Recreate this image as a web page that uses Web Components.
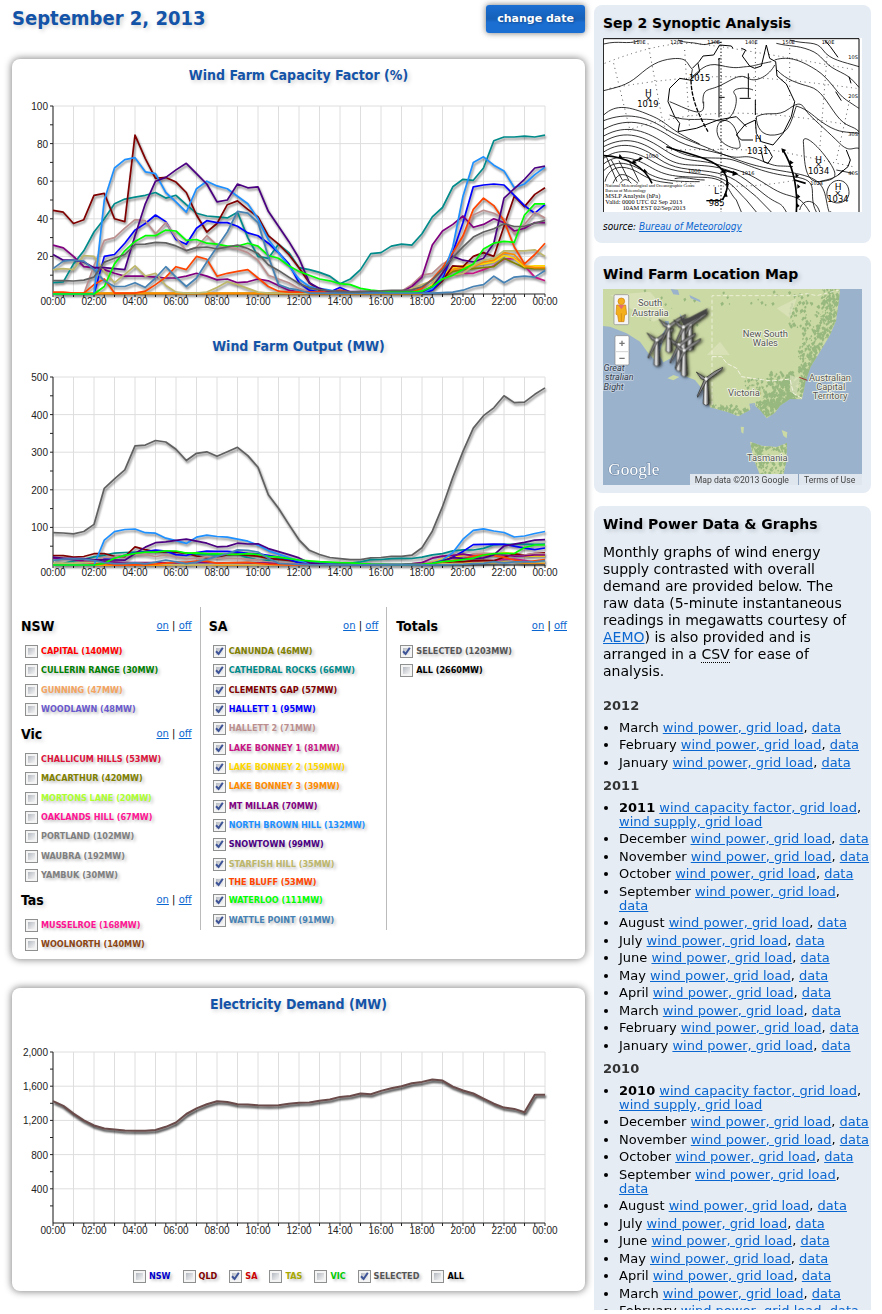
<!DOCTYPE html>
<html lang="en">
<head>
<meta charset="utf-8">
<title>Wind farm performance - September 2, 2013</title>
<style>
  html, body { margin: 0; background: #fff; }
  body { font-family: "DejaVu Sans", Verdana, sans-serif; color: #000; }
</style>
</head>
<body>
<wind-app></wind-app>

<template id="t-synoptic">
  <style>
    :host { display: block; }
    svg { display: block; width: 100%; height: auto; }
    .l path { fill: none; stroke: #000; stroke-width: 2.4; }
    .c { font: 25px "DejaVu Sans", sans-serif; }
    .c .h { font-size: 27px; }
    .n { font: 19px "Liberation Serif", serif; }
    .g { font: 15px "DejaVu Sans", sans-serif; }
  </style>
  <svg viewBox="40 114 777 522" role="img" aria-label="Synoptic chart">
    <rect x="40" y="114" width="777" height="522" fill="#fff"/>
    <g fill="none" stroke="#555" stroke-width="3" stroke-dasharray="3 11">
      <path d="M72 190 122 395M175 130 220 370 235 400M285 150 300 390M497 130 498 390M600 145 600 300M712 170 690 450M780 300 740 480"/>
      <path d="M45 190Q220 120 330 132T800 210M60 265Q260 230 400 230T800 265M115 390Q250 345 400 340T780 375M230 450 400 448 560 452 790 500M260 545Q440 575 620 540"/>
    </g>
    <path fill="none" stroke="#000" stroke-width="3" stroke-dasharray="4 6" d="M394 125V636"/>
    <g class="l">
      <path d="M42 272C80 262 110 258 145 228S205 180 250 176 290 190 308 208L304 232C330 215 345 185 392 196S445 202 470 200 495 195 545 185"/>
      <path d="M42 345C80 310 120 320 180 345S230 385 330 432"/>
      <path d="M42 132C90 120 110 135 150 122M265 120C290 130 300 125 330 132S370 120 395 128"/>
      <path d="M42 362C110 335 170 350 220 382S300 420 380 455 450 455 510 480 560 495 610 500"/>
      <path d="M42 388C120 345 190 375 245 412S370 450 420 470 500 500 590 515 700 545 710 600 720 630 725 636"/>
      <path d="M42 408C110 370 170 390 240 440S380 465 430 480 520 520 610 530 650 580 680 636"/>
      <path d="M42 425C110 385 165 410 225 450S320 475 390 495 470 515 540 560 620 570 660 636"/>
      <path d="M42 440C110 405 160 425 215 465S300 490 370 500 470 540 520 580 570 600 590 636"/>
      <path d="M42 456C100 418 155 440 205 475S290 505 360 515 450 550 500 590L545 636"/>
      <path d="M42 475C90 440 140 455 190 485S280 515 350 525 430 560 470 600L500 636"/>
      <path d="M42 492C80 460 130 470 180 500S260 530 340 532 410 570 440 600L455 636"/>
      <path d="M42 512C80 475 120 490 165 515S240 545 330 545"/>
      <path d="M46 545C60 490 110 495 150 520S210 545 250 550"/>
      <path d="M70 550C85 515 105 515 145 550M92 550C102 535 112 535 125 550"/>
      <path d="M50 470 82 545M65 480 98 540M88 482 118 542M120 487 148 545"/>
      <path d="M255 536C290 528 310 540 345 540M260 572C300 562 320 572 345 570"/>
      <path d="M340 310C338 260 355 275 395 255S450 220 475 235 540 225 555 195"/>
      <path d="M240 305C290 325 340 355 342 320V305M240 345C290 370 340 350 385 362S450 300 435 282 470 260 490 270"/>
      <path d="M382 395C380 350 425 350 440 395S455 445 440 445 385 430 382 395ZM500 350C540 330 560 355 600 325S640 325 660 345 720 400 750 430 790 440 808 445"/>
      <path d="M500 350C500 380 515 410 555 405S600 380 620 318C660 330 670 350 710 375S770 395 808 400"/>
      <path d="M562 210C590 240 625 250 660 260S710 305 740 345 790 375 808 395"/>
      <path d="M555 180C600 165 640 185 680 210S740 280 770 300 800 320 808 325"/>
      <path d="M560 130C600 140 620 135 660 150S700 190 740 210 780 230 808 262M600 120C650 135 680 120 700 150S760 185 808 200"/>
      <path d="M641 425C640 400 680 430 715 480S740 540 690 545 645 470 641 425ZM712 575C720 530 775 530 778 575S705 620 712 575Z"/>
      <path d="M690 545C700 540 740 540 760 510M630 630C640 590 680 600 690 636M740 510 790 520"/>
    </g>
    <g fill="none" stroke="#000" stroke-width="3" stroke-linejoin="round">
      <path d="M308 205 328 185 340 168 372 165 390 135 425 138 430 145M455 145 468 150 458 168 480 198 495 205 515 198 530 135 540 175 558 185 562 228 590 252 615 305 605 350 580 400 550 435 515 425 500 400 497 360 465 375 440 405 455 420 490 420M325 190 330 215 300 240 270 235 240 265 235 305 255 350 270 370 265 395 320 385 385 360 440 350 470 380"/>
      <path d="M525 435 540 455 548 470 535 490 522 485 515 455M770 450 782 480 775 500 745 525M705 120 722 140 745 172M738 275 755 302M778 230 784 250M385 178 392 175"/>
    </g>
    <path fill="none" stroke="#000" stroke-width="3" d="M388 175V352M497 300V345M476 220V293M450 295H483M388 292H405"/>
    <path fill="none" stroke="#000" stroke-width="4" stroke-dasharray="13 4" d="M304 240C305 300 330 350 355 395"/>
    <g fill="none" stroke="#000" stroke-width="5">
      <path d="M42 467C110 470 165 500 187 550M230 440C290 460 370 475 398 510S410 580 398 600M580 450C610 500 625 560 620 636"/>
      <path d="M130 485 155 475M400 510 440 520M615 540 648 550"/>
    </g>
    <path d="M90 462 100 475 86 475ZM130 480 142 490 126 492ZM164 506 175 518 160 515ZM398 505 412 518 394 518ZM430 512 446 522 428 528ZM412 540 418 556 408 556ZM408 572 414 590 402 590ZM575 445 590 450 578 458ZM600 480 612 488 600 494ZM617 520 628 527 618 534ZM623 552 632 560 623 566ZM623 582 632 590 622 596ZM622 610 630 618 620 624ZM150 470 160 475 148 484Z"/>
    <path fill="#fff" d="M43 552H347V633H43Z"/>
    <path d="M350 600H393V604H350Z"/>
    <g class="g">
      <text x="130" y="131">110E</text><text x="242" y="131">120E</text><text x="353" y="131">130E</text><text x="466" y="131">140E</text><text x="578" y="131">150E</text><text x="696" y="131">160E</text>
      <text x="776" y="178">10S</text><text x="776" y="294">20S</text><text x="776" y="408">30S</text><text x="776" y="525">40S</text>
      <text x="168" y="475">1000</text><text x="295" y="520">1000</text><text x="456" y="526">1016</text><text x="662" y="556">1024</text>
    </g>
    <g class="c">
      <text x="298" y="243">1015</text><text class="h" x="166" y="287">H</text><text x="166" y="302">×</text><text x="143" y="321">1019</text>
      <text class="h" x="495" y="427">H</text><text x="472" y="461">1031</text><text class="h" x="677" y="488">H</text><text x="676" y="502">×</text><text x="655" y="521">1034</text>
      <text class="h" x="735" y="571">H</text><text x="734" y="587">×</text><text x="713" y="606">1034</text><text class="h" x="373" y="583">L</text><text x="357" y="618">985</text>
    </g>
    <text class="n" x="47" y="561" style="font-size:13px">National Meteorological and Oceanographic Centre</text>
    <text class="n" x="47" y="575" style="font-size:13px">Bureau of Meteorology</text>
    <text class="n" x="47" y="594">MSLP Analysis (hPa)</text>
    <text class="n" x="47" y="612">Valid: 0000 UTC 02 Sep 2013</text>
    <text class="n" x="99" y="631">10AM EST 02/Sep/2013</text>
    <path fill="none" stroke="#000" stroke-width="3" d="M41 636V116H808V636"/>
  </svg>
</template>

<template id="t-map">
  <style>
    :host { display: block; }
    svg { display: block; width: 100%; height: auto; }
    .p text { font: 28px Roboto, sans-serif; fill: #555; stroke: #f2f5e6; stroke-width: 5; paint-order: stroke; text-anchor: middle; }
    .p .s { font-size: 27px; font-style: italic; fill: #333c4d; stroke: #c5d3e2; }
    .f text { font: 26px Roboto, sans-serif; fill: #444; }
  </style>
  <svg viewBox="39 132 777 588" role="img" aria-label="Map of south-east Australia with wind farm locations">
    <defs>
      <clipPath id="land"><path d="M39 132H750L747 165 738 228 720 270 690 320 662 365 647 408 636 463 600 462 570 482 555 503 530 520 512 497 488 476 480 495 445 514 415 502 360 487 343 440 315 405 292 396 262 372 285 350 264 302 242 340 220 352 208 330 228 250 205 285 200 350 175 325 150 290 110 265 60 245 39 243ZM480 590 515 602 560 606 591 594 589 650 580 690 510 690 490 640ZM232 400 250 390 268 396 250 406ZM452 545 462 546 460 566 454 562ZM575 555 592 562 590 580 580 572Z"/></clipPath>
      <linearGradient id="tw"><stop offset="0" stop-color="#777"/><stop offset=".4" stop-color="#eee"/><stop offset="1" stop-color="#222"/></linearGradient>
      <filter id="sh" x="-40%" y="-40%" width="180%" height="180%"><feDropShadow dx="5" dy="2" stdDeviation="4" flood-opacity=".8"/></filter>
      <g id="turbine">
        <path fill="url(#tw)" stroke="#222" stroke-width="1.5" d="M-4 0H4L9 74 0 79-9 74Z"/>
        <path fill="#888" stroke="#222" stroke-width="2" d="M0-4 25-22 50-35 48-28 4 4ZM-3-4-29-21-14 0 0 3ZM-4 0-26 50-25 55 2 6Z"/>
        <circle r="5" fill="#eee"/>
      </g>
    </defs>
    <rect x="39" y="132" width="777" height="588" fill="#9ab2cc"/>
    <g clip-path="url(#land)">
      <path fill="#cbd9a4" d="M39 132H816V720H39Z"/>
      <g id="woods"></g>
      <path fill="#dde3bd" opacity=".7" d="M60 150 180 140 240 210 190 230 120 190ZM390 290 420 330 350 330ZM600 390 630 400 620 450 600 440ZM560 190 620 160 600 220Z"/>
      <path fill="#9ab2cc" d="M242 132 264 135 268 150 250 148ZM298 150 330 165 332 172 302 160ZM224 228 236 228 240 260 228 246ZM268 205 290 230 282 240ZM478 476 494 474 500 494 482 498Z"/>
    </g>
    <path d="M366 480V152H612L652 146 680 152 748 135" fill="none" stroke="#f3f3e0" stroke-width="2.5" stroke-dasharray="12 7"/>
    <path d="M366 335 395 335 410 355 440 370 455 395 500 402 545 408 600 402 610 445 636 460" fill="none" stroke="#f3f3e0" stroke-width="3" stroke-dasharray="14 5"/>
    <path d="M628 397 652 406" stroke="#a03030" stroke-width="3"/>
    <g class="p">
      <text x="180" y="183">South</text><text x="181" y="212">Australia</text><text x="526" y="277">New South</text><text x="526" y="304">Wales</text>
      <text x="462" y="454">Victoria</text><text x="720" y="408">Australian</text><text x="722" y="435">Capital</text><text x="720" y="462">Territory</text><text x="532" y="647">Tasmania</text>
      <text class="s" x="72" y="379">Great</text><text class="s" x="88" y="406">stralian</text><text class="s" x="71" y="435">Bight</text>
    </g>
    <g filter="url(#sh)">
      <use href="#turbine" x="200" y="285"/><use href="#turbine" x="236" y="244"/><use href="#turbine" x="300" y="238"/><use href="#turbine" x="280" y="246"/>
      <use href="#turbine" x="266" y="300"/><use href="#turbine" x="282" y="316"/><use href="#turbine" x="348" y="402"/>
      <path d="M272 225 298 218 352 190 350 205 300 232 280 240Z" fill="#444"/>
    </g>
    <g stroke="#888" stroke-width="2"><rect x="72" y="149" width="44" height="90" rx="4" fill="#f5f5f5"/><rect x="75" y="272" width="42" height="88" rx="4" fill="#fff"/><path d="M78 320H114" stroke="#bbb"/></g>
    <path d="M88 295H104M96 287V303M88 340H104" stroke="#777" stroke-width="4"/>
    <g fill="#f4b01c" stroke="#c87f10" stroke-width="2"><path d="M80 180H107L110 208 104 210 102 230H86L83 210 78 208Z"/><circle cx="94" cy="169" r="10"/></g>
    <path d="M84 180H104L94 193Z" fill="#e56d6d"/><path d="M94 205V230" stroke="#c87f10" stroke-width="2"/>
    <text x="55" y="690" font-family="Liberation Serif, serif" font-size="52" fill="#fff" stroke="#6d87a5" stroke-width="3" paint-order="stroke">Google</text>
    <path fill="#dfe6ee" d="M300 687H816V720H300Z"/><path fill="#8ea4be" d="M624 687H627V720H624Z"/>
    <g class="f"><text x="314" y="713">Map data ©2013 Google</text><text x="642" y="713">Terms of Use</text></g>
  </svg>
</template>

<script>
const SHADOW = 'text-shadow: 2px 2px 4px rgba(0,0,0,.18);';
const NARROW = '"DejaVu Sans Condensed", "Noto Sans", sans-serif';

function define(name, render) {
  customElements.define(name, class extends HTMLElement {
    connectedCallback() {
      if (this.shadowRoot) return;
      const root = this.attachShadow({ mode: 'open' });
      render(this, root);
    }
  });
}

/* half-hourly capacity factors in percent; run() fills flat stretches */
const run = (n, v) => Array(n).fill(v);
const FARMS = [
  ['Lake Bonney 1', 81, '#c71585', [...run(37, .3), 4, 8, 10, 11, 11, 13, 15, 18.5, 19, 15, 9, 7]],
  ['Canunda', 46, '#808000', [...run(37, .3), 4, 8, 12, 13, 13.5, 14, 14.5, 19, 16.5, 14, 13.5, 13.5]],
  ['Lake Bonney 2', 159, '#ffd700', [...run(37, .3), 5, 10, 14, 15, 15.5, 16, 17, 20.5, 19, 14.5, 15, 15]],
  ['Lake Bonney 3', 39, '#ff8c00', [...run(37, .3), 4, 9, 13, 14, 14.5, 17, 18, 22, 21, 15, 14, 14]],
  ['Cathedral Rocks', 66, '#008b8b', [6,6.5,16,23,33,40,48,50.5,51.5,52.5,54,51,52.5,47.5,43,41.5,41,40.5,43.5,30,20,19,26.5,22,14,13,11.5,9.5,5.5,8,13,21.5,22,25.5,26.5,26,32,41,46,57,61,60.5,67,81.5,83.5,83.5,84,83.5,84.5]],
  ['Clements Gap', 57, '#800000', [44.5,43.5,37.5,39.5,52.5,53.5,40,38.5,84.5,72,61.5,62,59.5,54,42,33,37.5,47.5,49.5,45,41,31,26.5,21,14,6,2,...run(9, 1),1,2,7,15,14.5,20,22,20,36,52,46.5,53,56.5]],
  ['Hallett 1', 95, '#0000ff', [...run(5, 0),20,21,27,34,37.5,42,38.5,29,26.5,35,39,38,38,36,32.5,31,27,22,16,6,2,1,1,3.5,1,...run(7, .5),2,8,22,38,57,58,58.5,58,52.5,47,43,47.5]],
  ['Hallett 2', 71, '#bc8f8f', [...run(4, 0),15,28.5,30,35,39.5,39,32,38,30,23,25,31,26,25,24,22,18,10,8,6,3,...run(9, 1),1.5,5,10,11,16,19,30,42,44.5,43,40,32,37,43.5,40.5]],
  ['Mt Millar', 70, '#800080', [26,24.5,20,14.5,14,13,11,9.5,9.5,9.5,9,8.5,8.5,9.5,11,9.5,7.5,8,6,6.5,8,7,4.5,2,...run(11, 1),4,9,26,33.5,37,41.5,35.5,37,40,38,33.5,35,38,38]],
  ['Starfish Hill', 35, '#bdb76b', [13,13.5,13,20.5,20,12,6,10.5,15,9.5,11,4.5,1,.5,.5,1,3.5,6.5,5,3,1,...run(14, .5),3,5,7,8,10,11,15,18,19,23,23,23,23.5,20]],
  ['The Bluff', 53, '#ff4500', [1,1,.5,.5,5,8,.5,.5,.5,1.5,5,9,14.5,13,20,18.5,9.5,11,12,13,8.5,4,1.5,...run(5, 1),2,...run(7, 1),3,8,14,22,31,45,51,47,39,25,16,21,27]],
  ['North Brown Hill', 132, '#1e90ff', [...run(5, 0),50,67,71.5,72.5,65,64,54,49,43.5,56,60,57.5,56,52,48,40,29,22,15,8,4,3,2,...run(9, .7),3,10,25,52,70,73,68.5,65.5,56.5,58.5,63.5,67.5]],
  ['Snowtown', 99, '#4b0082', [21,18,18,17,14,14,13.5,13,31,48,60,62,66,69.5,64,58.5,49,50,58.5,56.5,57,44,36,28,19,6,3,...run(9, 1.2),1,4,11,20,18,17,19,27,51,56,61,67,68]],
  ['Waterloo', 111, '#00ff00', [...run(5, 0),4,16,23,28,31,31,34,33.5,28.5,29,27,26.5,25.5,25.5,27,25.5,20.5,19,15,12,10,8,7,5.5,5,3,2,1.5,1,1,1,1.5,4,8,10,13,16,24,27,28,27.5,42,48,48]],
  ['Wattle Point', 91, '#4682b4', [13.5,17.5,18,17.5,13,7,4,4,6,3.5,8.5,14.5,9,4,8.5,17,25,33,44,43,38,20,5,3,2,...run(13, .5),.7,1,2,4,5,9.5,6,9,9.5,9,12.5]],
];
const SELECTED = [86,85,83,89,108,204,229,253,317,319,331,327,308,278,297,301,289,301,313,291,260,187,151,108,67,39,28,20,17,14,14,19,20,23,23,26,46,90,155,233,302,364,397,418,450,432,433,454,471];
const DEMAND = [1425,1370,1280,1200,1140,1105,1095,1082,1078,1078,1088,1125,1175,1275,1340,1390,1425,1415,1388,1385,1378,1375,1378,1395,1406,1408,1430,1445,1475,1485,1515,1505,1545,1575,1600,1635,1650,1678,1665,1595,1550,1515,1455,1395,1350,1335,1295,1500,1500];

const CHARTS = {
  factor: { top: 21, max: 100, step: 20, series: [...FARMS.map(f => [f[2], f[3]]), ['#606060', SELECTED.map(v => v / 12.03)]] },
  output: { top: 21, max: 500, step: 100, series: [['#606060', SELECTED], ...FARMS.map(f => [f[2], f[3].map(v => v * f[1] / 100)])] },
  demand: { top: 38, max: 2000, step: 400, series: [['#6b4a4a', DEMAND]] },
};

define('line-chart', (el, root) => {
  const c = CHARTS[el.getAttribute('data')];
  const L = 41, R = 533, B = 209, T = c.top, H = B - T;
  const x = i => +(L + (R - L) * i / 48).toFixed(1), y = v => +(B - H * v / c.max).toFixed(1);
  let grid = '', ticks = '', text = '';
  for (let h = 0; h <= 24; h++) {
    grid += `M${x(h * 2)} ${T}V${B}`;
    if (h % 2 === 0) text += `<text x="${x(h * 2)}" y="220" text-anchor="middle">${String(h % 24).padStart(2, '0')}:00</text>`;
  }
  for (let i = 0; i <= 48; i++) ticks += `M${x(i)} ${B}v3`;
  for (let v = 0; v <= c.max; v += c.step / 2) {
    if (v) ticks += `M${L} ${y(v)}h-3`;
    if (v && v % c.step === 0) {
      grid += `M${L} ${y(v)}H${R}`;
      text += `<text x="36" y="${y(v) + 4}" text-anchor="end">${v.toLocaleString('en-US')}</text>`;
    }
  }
  const lines = c.series.map(([k, d]) => `<polyline stroke="${k}" points="${d.map((v, i) => x(i) + ',' + y(v)).join(' ')}"/>`).join('');
  root.innerHTML = `<style>
    :host { display: block; }
    h2 { margin: 0; font: bold 14px/20px ${NARROW}; color: #1353a8; text-align: center; ${SHADOW} }
    svg { display: block; width: 100%; height: auto; }
    text { font: 10px "Liberation Sans", Arial, sans-serif; fill: #222; }
    .lines { fill: none; stroke-width: 1.7; stroke-linejoin: round; filter: drop-shadow(1px 2px 1px rgba(0,0,0,.5)); }
    .lines.heavy { stroke-width: 2; filter: drop-shadow(1px 2px 1px rgba(0,0,0,.9)); }
  </style>
  <h2><slot></slot></h2>
  <svg viewBox="0 0 573 251"><path d="${grid}" stroke="#dedede" fill="none"/>
  <path d="M${L} ${T}V${B}H${R}${ticks}" stroke="#222" fill="none"/>${text}
  <g class="lines ${c.series.length < 2 ? 'heavy' : ''}">${lines}</g></svg>`;
});

define('chart-card', (el, root) => {
  root.innerHTML = `<style>
    :host { display: block; padding-top: 6px; border-radius: 8px; background: #fff; box-shadow: 0 0 7px 1px rgba(0,0,0,.45); }
  </style><slot></slot>`;
});

define('tick-box', (el, root) => {
  const tick = "url(\"data:image/svg+xml,%3Csvg xmlns='http://www.w3.org/2000/svg' viewBox='0 0 11 11'%3E%3Cpath d='M2 5.2 4.6 8 8.8 1.8' fill='none' stroke='%233d5397' stroke-width='2'/%3E%3C/svg%3E\")";
  root.innerHTML = `<style>
    :host { display: block; height: 19px; font: bold 9px/19px ${NARROW}; white-space: nowrap; }
    :host([clipped]) { height: 9px; overflow: hidden; margin: 4px 0; }
    :host([clipped]) label { margin-top: -5px; }
    label { display: flex; align-items: center; gap: 3px; height: 19px; text-transform: uppercase; color: ${el.getAttribute('color')}; text-shadow: 2px 2px 3px rgba(0,0,0,.25); }
    input { appearance: none; box-sizing: border-box; flex: none; width: 13px; height: 13px; margin: 0; border: 1px solid #8e8f8f; background: linear-gradient(135deg, #b4b9c1, #f6f6f6) 2px 2px / 7px 7px no-repeat #f4f4f4; }
    input:checked { background: ${tick} 0 0 / 11px 11px no-repeat, linear-gradient(135deg, #b4b9c1, #f6f6f6) 2px 2px / 7px 7px no-repeat #f4f4f4; }
  </style><label><input type="checkbox" ${el.hasAttribute('on') ? 'checked' : ''}><span><slot></slot></span></label>`;
});

define('farm-group', (el, root) => {
  root.innerHTML = `<style>
    :host { display: block; }
    header { display: flex; justify-content: space-between; align-items: center; height: 18px; margin-bottom: 7px; }
    h3 { margin: 0; font: bold 14px/18px ${NARROW}; ${SHADOW} }
    nav { font: 10px/18px "DejaVu Sans", Verdana, sans-serif; padding-right: 8px; }
    a { color: #0a66d0; }
    .rows { padding-left: 4px; }
    ::slotted(tick-box:nth-child(3n+2)) { margin-bottom: 1px; }
  </style>
  <header><h3>${el.getAttribute('name')}</h3><nav><a href="#on">on</a> | <a href="#off">off</a></nav></header>
  <div class="rows"><slot></slot></div>`;
});

const box = (n, k, on, clip) => `<tick-box color="${k}" ${on ? 'on' : ''} ${clip ? 'clipped' : ''}>${n}</tick-box>`;
define('farm-legend', (el, root) => {
  const by = n => FARMS.find(f => f[0] === n);
  const sa = ['Canunda','Cathedral Rocks','Clements Gap','Hallett 1','Hallett 2','Lake Bonney 1','Lake Bonney 2','Lake Bonney 3','Mt Millar','North Brown Hill','Snowtown','Starfish Hill','The Bluff','Waterloo','Wattle Point'];
  root.innerHTML = `<style>
    :host { display: grid; grid-template-columns: 1fr 1fr 1fr; align-items: start; padding: 0 10px 4px 0; }
    .col { display: grid; gap: 6px; padding: 10px 0 0 9px; }
    .mid { box-sizing: border-box; min-height: 320px; align-content: start; border: solid #bbb; border-width: 0 1px; padding-left: 8px; }
  </style>
  <div class="col">
    <farm-group name="NSW">${box('Capital (140MW)','#ff0000')}${box('Cullerin Range (30MW)','#008000')}${box('Gunning (47MW)','#f4a460')}${box('Woodlawn (48MW)','#6a5acd')}</farm-group>
    <farm-group name="Vic">${box('Challicum Hills (53MW)','#dc143c')}${box('Macarthur (420MW)','#808000')}${box('Mortons Lane (20MW)','#adff2f')}${box('Oaklands Hill (67MW)','#ff1493')}${box('Portland (102MW)','#808080')}${box('Waubra (192MW)','#808080')}${box('Yambuk (30MW)','#808080')}</farm-group>
    <farm-group name="Tas">${box('Musselroe (168MW)','#ff1493')}${box('Woolnorth (140MW)','#8b4513')}</farm-group>
  </div>
  <div class="col mid"><farm-group name="SA">${sa.map(n => box(`${n} (${by(n)[1]}MW)`, by(n)[2], true, n === 'The Bluff')).join('')}</farm-group></div>
  <div class="col"><farm-group name="Totals">${box('Selected (1203MW)','#555555',true)}${box('All (2660MW)','#000000')}</farm-group></div>`;
});

define('state-legend', (el, root) => {
  root.innerHTML = `<style>:host { display: flex; justify-content: center; gap: 12px; padding: 2px 0 5px; }</style>` +
    box('NSW','#0000cd') + box('QLD','#800000') + box('SA','#cc0000',true) + box('TAS','#a8a800') + box('VIC','#00cc00') + box('Selected','#555555',true) + box('All','#000000');
});

define('side-box', (el, root) => {
  root.innerHTML = `<style>
    :host { display: block; padding: 8px 9px; border-radius: 8px; background: #e5ecf4; }
    h2 { margin: 0 0 5px; font: bold 14px/20px "DejaVu Sans", Verdana, sans-serif; ${SHADOW} }
  </style><h2>${el.getAttribute('heading')}</h2><slot></slot>`;
});

define('synoptic-chart', (el, root) => root.append(document.getElementById('t-synoptic').content.cloneNode(true)));

define('location-map', (el, root) => {
  root.append(document.getElementById('t-map').content.cloneNode(true));
  let s = 7; const rnd = () => (s = s * 16807 % 2147483647) / 2147483647;
  const patches = [[725,150,30,30,60],[720,190,30,40,80],[700,230,30,50,90],[670,290,35,45,80],[650,340,28,40,90],[645,400,14,40,80],[620,430,30,35,80],[570,400,40,20,70],[585,440,30,35,140],[560,470,45,22,160],[530,490,35,20,90],[440,500,30,8,30],[400,490,40,10,30],[510,425,50,25,70],[535,605,60,14,50],[495,625,14,40,60],[575,640,14,50,40],[530,660,40,30,60],[630,200,35,50,50],[510,160,150,20,14],[200,180,120,60,16]];
  let d = '';
  for (const [cx, cy, w, h, n] of patches) for (let i = 0; i < n; i++) {
    const px = cx + (rnd() - .5) * 2 * w, py = cy + (rnd() - .5) * 2 * h, r = 2 + rnd() * 5;
    d += `M${px.toFixed(0)} ${py.toFixed(0)}l${r.toFixed(0)} ${(-r * .7).toFixed(0)} ${(r * .6).toFixed(0)} ${r.toFixed(0)} ${(-r).toFixed(0)} ${r.toFixed(0)}z`;
  }
  root.getElementById('woods').innerHTML = `<path fill="#86ac72" opacity=".75" d="${d}"/>`;
});

define('year-list', (el, root) => {
  const names = ['January','February','March','April','May','June','July','August','September','October','November','December'];
  const year = el.getAttribute('year');
  const months = names.slice(Number(el.getAttribute('from')) - 1, Number(el.getAttribute('to'))).reverse();
  const total = el.hasAttribute('annual') ? `<li><b>${year}</b> <a href="#cf">wind capacity factor, grid load</a>,<br><a href="#ws">wind supply, grid load</a></li>` : '';
  root.innerHTML = `<style>
    :host { display: block; font: 13px/14px "DejaVu Sans", Verdana, sans-serif; }
    h3 { margin: 0; font: bold 13px/17px "DejaVu Sans", Verdana, sans-serif; color: #333; }
    ul { margin: 7px 0 0; padding: 0 0 4px 16px; }
    li { margin-bottom: 3px; white-space: nowrap; } li:nth-child(even) { margin-bottom: 4px; }
    a { color: #0a66d0; }
  </style><h3>${year}</h3><ul>${total}${months.map(m => `<li>${m} <a href="#g">wind power, grid load</a>,${m === 'September' ? '<br>' : ' '}<a href="#d">data</a></li>`).join('')}</ul>`;
});

define('wind-app', (el, root) => {
  root.innerHTML = `<style>
    :host { box-sizing: border-box; display: grid; grid-template-columns: minmax(0, 1fr) 277px; gap: 9px; padding: 5px 11px 0 12px; height: calc(100vh - 4px); overflow: hidden; }
    main { display: grid; align-content: start; gap: 29px; }
    header { display: flex; justify-content: space-between; height: 25px; }
    h1 { margin: 0; font: bold 20px/26px ${NARROW}; color: #1353a8; ${SHADOW} }
    button { height: 28px; padding: 0 11px; border: 0; border-radius: 3px; color: #fff; font: bold 11px/28px "DejaVu Sans", Verdana, sans-serif; background: linear-gradient(#1b6ed2, #1560b8 50%, #1b6ed2 62%); box-shadow: 0 0 6px rgba(0,0,0,.55); text-shadow: 1px 1px 2px rgba(0,0,0,.3); }
    aside { display: grid; grid-template-columns: minmax(0, 1fr); align-content: start; gap: 13px; }
    a { color: #0a66d0; }
    .src { margin: 7px 0 0; font: italic 10px/16px ${NARROW}; }
    .intro { margin: 10px 0 17px; font: 14px/17px "DejaVu Sans", Verdana, sans-serif; }
    abbr { text-decoration: none; border-bottom: 1px dotted #000; }
  </style>
  <main>
    <header><h1>September 2, 2013</h1><button type="button">change date</button></header>
    <chart-card><line-chart data="factor">Wind Farm Capacity Factor (%)</line-chart><line-chart data="output">Wind Farm Output (MW)</line-chart><farm-legend></farm-legend></chart-card>
    <chart-card><line-chart data="demand">Electricity Demand (MW)</line-chart><state-legend></state-legend></chart-card>
  </main>
  <aside>
    <side-box heading="Sep 2 Synoptic Analysis"><synoptic-chart></synoptic-chart><p class="src">source: <a href="#bom">Bureau of Meteorology</a></p></side-box>
    <side-box heading="Wind Farm Location Map"><location-map></location-map></side-box>
    <side-box heading="Wind Power Data &amp; Graphs">
      <p class="intro">Monthly graphs of wind energy supply contrasted with overall demand are provided below. The raw data (5-minute instantaneous readings in megawatts courtesy of <a href="#aemo">AEMO</a>) is also provided and is arranged in a <abbr>CSV</abbr> for ease of analysis.</p>
      <year-list year="2012" from="1" to="3"></year-list>
      <year-list year="2011" from="1" to="12" annual></year-list>
      <year-list year="2010" from="2" to="12" annual></year-list>
    </side-box>
  </aside>`;
});
</script>
</body>
</html>
